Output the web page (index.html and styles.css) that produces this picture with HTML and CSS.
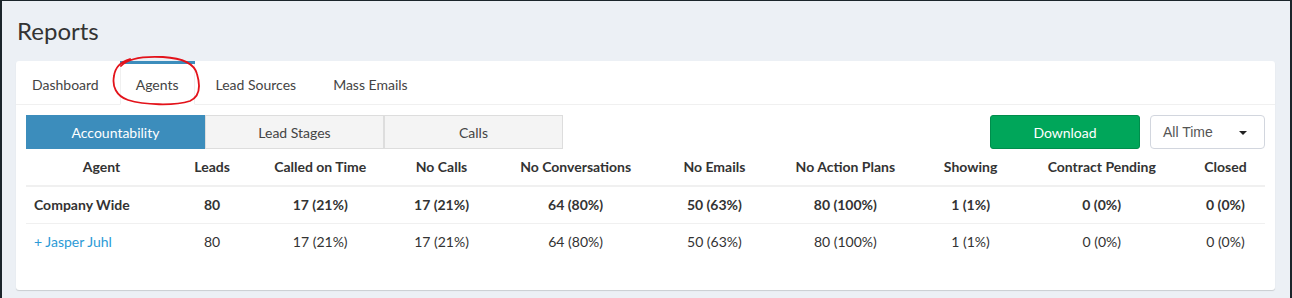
FILE: index.html
```html
<!DOCTYPE html>
<html>
    <head>
        <title>Reports</title>
        <link rel="stylesheet" href="styles.css">
    </head>
    <body>
        <div class="content-header">
            <h1>Reports</h1>
        </div>

        <div class="box">
            <ul class="nav-tabs">
                <li><a href="#">Dashboard</a></li>
                <li class="active"><a href="#">Agents</a></li>
                <li><a href="#">Lead Sources</a></li>
                <li><a href="#">Mass Emails</a></li>
            </ul>
            <svg class="scribble" width="96" height="56" viewBox="0 0 96 56">
                <path d="M13 14 C20 6, 35 4, 55 5 C72 6, 86 10, 89 22 C92 32, 93 44, 82 49 C66 54, 36 53, 20 48 C8 44, 4 34, 6 24 C7 16, 12 10, 22 7" />
            </svg>

            <div class="tab-content">
                <div class="toolbar">
                    <div class="btn-group">
                        <button class="seg active">Accountability</button>
                        <button class="seg">Lead Stages</button>
                        <button class="seg">Calls</button>
                    </div>
                    <div class="actions">
                        <button class="btn-download">Download</button>
                        <div class="select">All Time<span class="caret"></span></div>
                    </div>
                </div>

                <table class="report">
                    <thead>
                        <tr>
                            <th>Agent</th>
                            <th>Leads</th>
                            <th>Called on Time</th>
                            <th>No Calls</th>
                            <th>No Conversations</th>
                            <th>No Emails</th>
                            <th>No Action Plans</th>
                            <th>Showing</th>
                            <th>Contract Pending</th>
                            <th>Closed</th>
                        </tr>
                    </thead>
                    <tbody>
                        <tr class="total">
                            <td>Company Wide</td>
                            <td>80</td>
                            <td>17 (21%)</td>
                            <td>17 (21%)</td>
                            <td>64 (80%)</td>
                            <td>50 (63%)</td>
                            <td>80 (100%)</td>
                            <td>1 (1%)</td>
                            <td>0 (0%)</td>
                            <td>0 (0%)</td>
                        </tr>
                        <tr>
                            <td><a href="#" class="agent-link">+ Jasper Juhl</a></td>
                            <td>80</td>
                            <td>17 (21%)</td>
                            <td>17 (21%)</td>
                            <td>64 (80%)</td>
                            <td>50 (63%)</td>
                            <td>80 (100%)</td>
                            <td>1 (1%)</td>
                            <td>0 (0%)</td>
                            <td>0 (0%)</td>
                        </tr>
                    </tbody>
                </table>
            </div>
        </div>
    </body>
</html>
```

FILE: styles.css
```css
body {
    font-family: Lato, "Open Sans", sans-serif;
    font-size: 14px;
    color: #333;
    background-color: #ecf0f5;
    margin: 0;
    height: 297px;
    border-top: 1px solid #1b252b;
    border-left: 2px solid #1b252b;
    border-right: 2px solid #1b252b;
}
.content-header {
    padding: 17px 15px 0 15px;
}
.content-header h1 {
    margin: 0;
    font-size: 24px;
    font-weight: normal;
    line-height: 26px;
    color: #333;
}
.box {
    position: relative;
    background-color: #ffffff;
    margin: 17px 15px 0 14px;
    border-radius: 3px;
    box-shadow: 0 1px 1px rgba(0, 0, 0, 0.15);
}
.nav-tabs {
    display: flex;
    list-style: none;
    margin: 0;
    padding: 0;
    border-bottom: 1px solid #f0f0f0;
}
.nav-tabs li {
    border-top: 3px solid transparent;
    margin-right: 5px;
    margin-bottom: -1px;
}
.nav-tabs li a {
    display: block;
    padding: 11px 15px 9px 15px;
    line-height: 20px;
    color: #444;
    text-decoration: none;
    border: 1px solid transparent;
    border-top: none;
}
.nav-tabs li.active {
    border-top-color: #3c8dbc;
}
.nav-tabs li.active a {
    background-color: #fff;
    border-left-color: #f0f0f0;
    border-right-color: #f0f0f0;
}
.scribble {
    position: absolute;
    left: 92px;
    top: -9px;
}
.scribble path {
    fill: none;
    stroke: #e3131b;
    stroke-width: 1.8;
    stroke-linecap: round;
}
.tab-content {
    padding: 10px 10px 30px 10px;
}
.toolbar {
    display: flex;
    justify-content: space-between;
    align-items: center;
}
.btn-group {
    display: flex;
}
.seg {
    width: 179px;
    height: 34px;
    font-family: Lato, sans-serif;
    font-size: 14px;
    color: #444;
    background-color: #f4f4f4;
    border: 1px solid #ddd;
    margin: 0;
}
.seg.active {
    background-color: #3c8dbc;
    border-color: #3c8dbc;
    color: #fff;
}
.actions {
    display: flex;
    align-items: center;
    gap: 10px;
}
.btn-download {
    width: 150px;
    height: 34px;
    font-family: Lato, sans-serif;
    font-size: 14px;
    color: #fff;
    background-color: #00a65a;
    border: 1px solid #008d4c;
    border-radius: 3px;
}
.select {
    position: relative;
    width: 101px;
    height: 32px;
    padding: 0 0 0 12px;
    border: 1px solid #d2d6de;
    border-radius: 4px;
    font-family: "Liberation Sans", Arial, sans-serif;
    font-size: 14px;
    color: #555;
    line-height: 32px;
}
.caret {
    position: absolute;
    right: 17px;
    top: 15px;
    border-left: 4px solid transparent;
    border-right: 4px solid transparent;
    border-top: 4px solid #222;
}
.report {
    width: 100%;
    border-collapse: collapse;
}
.report th, .report td {
    padding: 8px;
    line-height: 20px;
    text-align: center;
    white-space: nowrap;
}
.report th {
    font-weight: bold;
    border-bottom: 2px solid #f0f0f0;
}
.report td {
    border-top: 1px solid #f0f0f0;
}
.report td:first-child {
    text-align: left;
}
.report tbody tr:first-child td {
    border-top: none;
}
.report .total td {
    font-weight: bold;
}
.agent-link {
    color: #2b9ad6;
    text-decoration: none;
}
```
